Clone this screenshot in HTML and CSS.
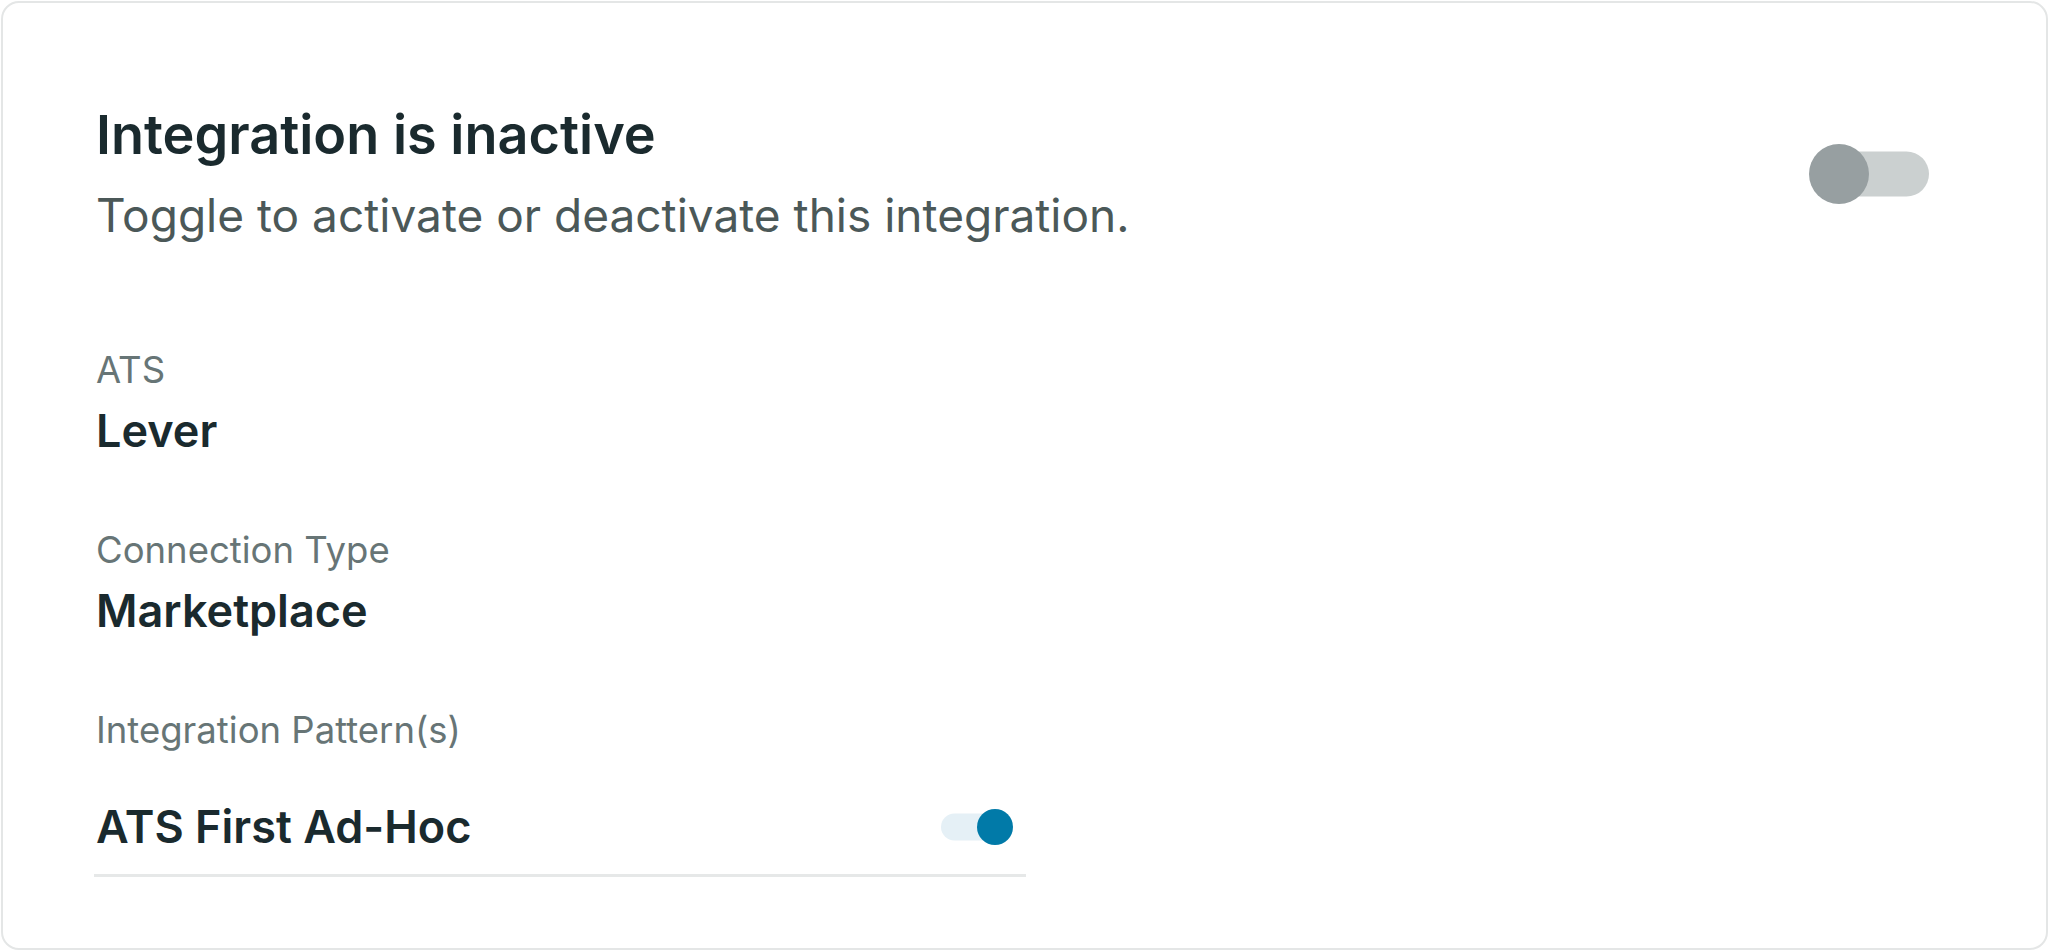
FILE: index.html
```html
<!DOCTYPE html>
<html>
<head>
<meta name="viewport" content="width=device-width, initial-scale=1">
<link rel="stylesheet" href="styles.css">
</head>
<body>
<div class="card">
  <div class="header">
    <div class="header-text">
      <h1 class="title">Integration is inactive</h1>
      <p class="subtitle">Toggle to activate or deactivate this integration.</p>
    </div>
    <span class="switch switch-large">
      <span class="switch-track"></span>
      <span class="switch-knob"></span>
    </span>
  </div>

  <div class="field field-first">
    <div class="field-label">ATS</div>
    <div class="field-value">Lever</div>
  </div>

  <div class="field">
    <div class="field-label">Connection Type</div>
    <div class="field-value">Marketplace</div>
  </div>

  <div class="field">
    <div class="field-label">Integration Pattern(s)</div>
    <div class="pattern-row">
      <div class="field-value">ATS First Ad-Hoc</div>
      <span class="switch switch-small">
        <span class="switch-track"></span>
        <span class="switch-knob"></span>
      </span>
    </div>
  </div>
</div>
</body>
</html>
```

FILE: styles.css
```css
body {
  font-family: Inter, "Noto Sans", sans-serif;
  margin: 0;
  padding: 1px;
  background: white;
}

.card {
  box-sizing: border-box;
  height: calc(100vh - 2px);
  border: 2px solid #e4e6e6;
  border-radius: 18px;
  background: white;
  padding: 100px 93px 0 93px;
}

.header {
  display: flex;
  align-items: center;
  justify-content: space-between;
  padding-right: 24px;
}

.title {
  margin: 0;
  font-size: 54px;
  font-weight: 600;
  line-height: 64px;
  color: #1a2a2e;
}

.subtitle {
  margin: 18px 0 0 0;
  font-size: 46px;
  line-height: 60px;
  color: #4b5858;
}

.field {
  margin-top: 67px;
}

.field-first {
  margin-top: 101px;
}

.field-label {
  font-size: 36.5px;
  line-height: 48px;
  color: #677576;
  margin-bottom: 9px;
}

.field-value {
  font-size: 45px;
  font-weight: 600;
  line-height: 56px;
  color: #1a2a2e;
}

.pattern-row {
  display: flex;
  align-items: center;
  justify-content: space-between;
  width: 932px;
  box-sizing: border-box;
  margin-top: 25px;
  margin-left: -2px;
  padding: 20px 13px 19px 2px;
  border-bottom: 3px solid #e6e8e8;
}

.switch {
  position: relative;
  display: inline-block;
}

.switch-track {
  position: absolute;
  right: 0;
  top: 50%;
  transform: translateY(-50%);
}

.switch-knob {
  position: absolute;
  top: 0;
  border-radius: 50%;
}

.switch-large {
  width: 120px;
  height: 60px;
}

.switch-large .switch-track {
  width: 110px;
  height: 45px;
  border-radius: 23px;
  background: #cbd0d0;
}

.switch-large .switch-knob {
  left: 0;
  width: 60px;
  height: 60px;
  background: #979fa1;
}

.switch-small {
  width: 72px;
  height: 36px;
}

.switch-small .switch-track {
  left: 0;
  right: 4px;
  height: 27px;
  border-radius: 14px;
  background: #e5f0f6;
}

.switch-small .switch-knob {
  right: 0;
  width: 36px;
  height: 36px;
  background: #017aa8;
}
```
